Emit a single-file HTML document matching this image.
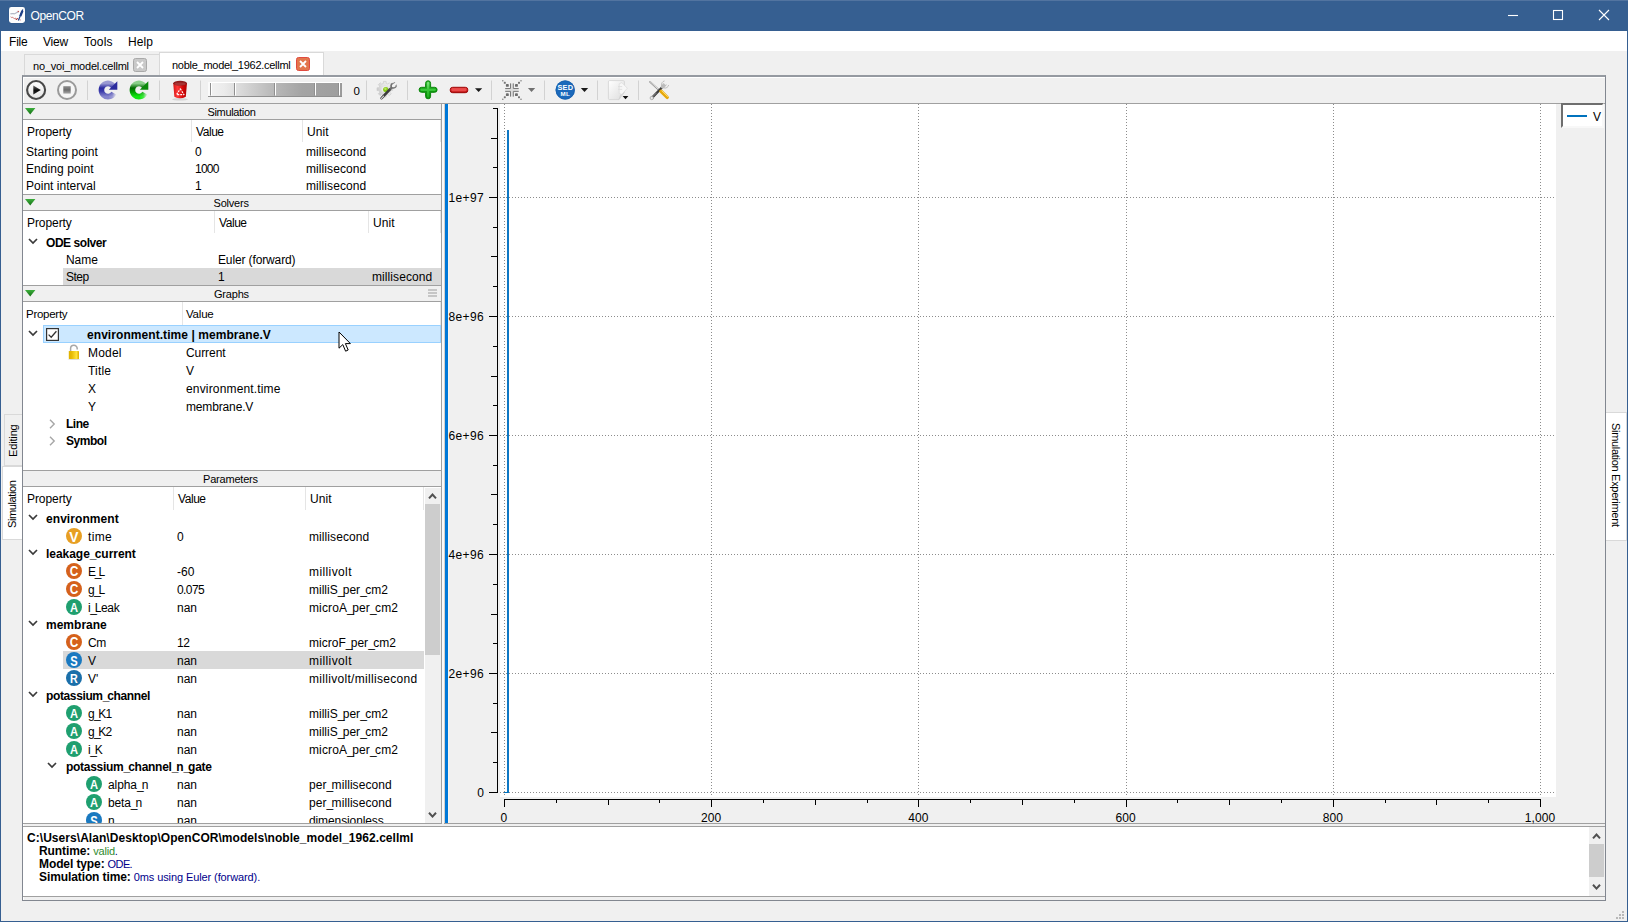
<!DOCTYPE html><html><head><meta charset="utf-8"><title>OpenCOR</title><style>*{box-sizing:border-box;margin:0;padding:0}
html,body{width:1628px;height:922px;overflow:hidden;background:#f0f0f0}
body{font-family:"Liberation Sans",sans-serif;font-size:12px;color:#000;letter-spacing:.1px}
#win{position:absolute;left:0;top:0;width:1628px;height:922px;background:#f0f0f0;overflow:hidden}
.a{position:absolute}
.t{position:absolute;white-space:pre;line-height:16px;height:16px}
.b{font-weight:bold}
.th{font-size:11px;letter-spacing:-.2px}
#title{left:0;top:0;width:1628px;height:31px;background:#365f91}
#menu{left:1px;top:31px;width:1626px;height:20px;background:#fff}
.edgeL{left:0;top:31px;width:1px;height:891px;background:#365f91}
.edgeR{left:1627px;top:31px;width:1px;height:891px;background:#365f91}
.edgeB{left:0;top:921px;width:1628px;height:1px;background:#365f91}
</style></head><body>
<div id="win">
<div class="a" id="title"></div>
<div class="a" style="left:0;top:0;width:1628px;height:1px;background:#5274a0"></div>
<svg class="a" style="left:8px;top:6px" width="18" height="18" viewBox="-1 -1 18 18"><rect x="-.6" y="-.6" width="17.2" height="17.2" rx="3" fill="#2e5687" opacity=".7"/><rect x="0" y="0" width="16" height="16" rx="2.4" fill="#fdfdfd"/><path d="M1.4 6.9 q1.6 -.6 3 -.2 t2.8 -.8 t2.2 -.4" stroke="#b4b8c6" stroke-width="1.2" fill="none"/><path d="M8.6 4.3 l1.4 .3" stroke="#c65a5a" stroke-width="1.1"/><path d="M1.6 9.8 l1.2 .8 l1 -.4 l1.4 1.6 l1.2 -.8 l1.2 1.4 l1.3 -1.4" stroke="#c87070" stroke-width=".9" fill="none"/><path d="M6.6 12.2 l1.4 .2 l.6 -1" stroke="#a83030" stroke-width="1" fill="none"/><path d="M9.4 13.4 L13.8 2.6" stroke="#1d3f86" stroke-width="1.2" fill="none"/><path d="M11.3 9.2 L13.4 3.8" stroke="#1d3f86" stroke-width="2.3" fill="none"/><path d="M10.6 12.8 l1.2 .2" stroke="#b05a6a" stroke-width=".8"/></svg>
<div class="t" style="left:30.5px;top:8px;color:#fff;font-size:12px;letter-spacing:-.4px">OpenCOR</div>
<svg class="a" style="left:1500px;top:0" width="128" height="31" viewBox="0 0 128 31" fill="none" stroke="#fff" stroke-width="1.1"><path d="M8 15.5h10"/><rect x="53.5" y="10.5" width="9" height="9"/><path d="M99 10l10 10M109 10l-10 10"/></svg>
<div class="a" id="menu"></div>
<div class="t" style="left:9px;top:34px;letter-spacing:-.2px">File</div>
<div class="t" style="left:43px;top:34px;letter-spacing:-.25px">View</div>
<div class="t" style="left:84px;top:34px">Tools</div>
<div class="t" style="left:128px;top:34px">Help</div>
<div class="a edgeL"></div><div class="a edgeR"></div><div class="a edgeB"></div>
<!-- tabs -->
<div class="a" style="left:24px;top:54px;width:136px;height:22px;border:1px solid #d9d9d9;border-bottom:none;background:#f0f0f0"></div>
<div class="t th" style="left:33px;top:58px">no_voi_model.cellml</div>
<svg class="a" style="left:133px;top:58px" width="14" height="14" viewBox="0 0 14 14"><rect x=".5" y=".5" width="13" height="13" rx="2" fill="#c9c9c9" stroke="#a9a9a9"/><path d="M4 4l6 6M10 4l-6 6" stroke="#fff" stroke-width="1.8"/></svg>
<!-- outer frame -->
<div class="a" style="left:22px;top:75px;width:1584px;height:826px;border:1px solid #828790;border-top:2px solid #959aa1"></div>
<div class="a" style="left:23px;top:77px;width:1582px;height:1px;background:#fff"></div>
<div class="a" style="left:23px;top:77px;width:1px;height:823px;background:#fff"></div>
<div class="a" style="left:159px;top:52px;width:165px;height:23px;border:1px solid #d9d9d9;border-bottom:none;background:#fff"></div>
<div class="t th" style="left:172px;top:57px;letter-spacing:-.27px">noble_model_1962.cellml</div>
<svg class="a" style="left:296px;top:57px" width="14" height="14" viewBox="0 0 14 14"><rect x=".5" y=".5" width="13" height="13" rx="2" fill="#e2764d" stroke="#e04a3f"/><path d="M4 4l6 6M10 4l-6 6" stroke="#fff" stroke-width="1.8"/></svg>
<!-- left vertical tabs -->
<div class="a" style="left:4px;top:414px;width:18px;height:52px;border:1px solid #d9d9d9;border-right:none;background:#f0f0f0"></div>

<div class="t" style="left:5px;top:456.5px;transform:rotate(-90deg);transform-origin:0 0;letter-spacing:-.15px;font-size:11px">Editing</div>
<div class="a" style="left:2px;top:466px;width:20px;height:74px;border:1px solid #d9d9d9;border-right:none;background:#fff"></div>
<div class="t" style="left:4px;top:528px;transform:rotate(-90deg);transform-origin:0 0;letter-spacing:-.4px;font-size:11px">Simulation</div>
<!-- right vertical tab -->
<div class="a" style="left:1606px;top:412px;width:21px;height:129px;border:1px solid #d9d9d9;border-left:none;background:#fff"></div>
<div class="t th" style="left:1624px;top:423px;transform:rotate(90deg);transform-origin:0 0;letter-spacing:-.3px">Simulation Experiment</div>
<!-- size grip -->
<svg class="a" style="left:1613px;top:910px" width="12" height="12" viewBox="0 0 12 12" fill="#b8b8b8"><rect x="9" y="1" width="2" height="2"/><rect x="6" y="4" width="2" height="2"/><rect x="9" y="4" width="2" height="2"/><rect x="3" y="7" width="2" height="2"/><rect x="6" y="7" width="2" height="2"/><rect x="9" y="7" width="2" height="2"/></svg>

<!-- toolbar -->
<div class="a" style="left:24px;top:103px;width:1581px;height:1px;background:#a0a0a0"></div>
<svg class="a" style="left:24px;top:78px" width="680" height="25" viewBox="24 78 680 25">
<defs>
<linearGradient id="gPlay" x1="0" y1="0" x2="0" y2="1"><stop offset="0" stop-color="#ffffff"/><stop offset="1" stop-color="#e4e4e4"/></linearGradient>
<linearGradient id="gTri" x1="0" y1="0" x2="0" y2="1"><stop offset="0" stop-color="#6a6a6a"/><stop offset=".55" stop-color="#0a0a0a"/><stop offset="1" stop-color="#2a2a2a"/></linearGradient><linearGradient id="gStop" x1="0" y1="0" x2="0" y2="1"><stop offset="0" stop-color="#8c8c8c"/><stop offset=".5" stop-color="#6c6c6c"/><stop offset="1" stop-color="#a8a8a8"/></linearGradient>
<linearGradient id="gBlue" x1="0" y1="0" x2="0" y2="1"><stop offset="0" stop-color="#9a9ad2"/><stop offset=".35" stop-color="#2a2aa0"/><stop offset=".6" stop-color="#3c3cac"/><stop offset="1" stop-color="#8484cc"/></linearGradient>
<linearGradient id="gGreen" x1="0" y1="0" x2="0" y2="1"><stop offset="0" stop-color="#8ccf8c"/><stop offset=".35" stop-color="#006a00"/><stop offset=".65" stop-color="#00a000"/><stop offset="1" stop-color="#10e810"/></linearGradient>
<linearGradient id="gFade" x1="0" y1="0" x2="1" y2="0"><stop offset="0" stop-color="#fff"/><stop offset=".62" stop-color="#fff"/><stop offset=".95" stop-color="#000"/></linearGradient>
<mask id="mTailB" maskUnits="userSpaceOnUse" x="90" y="76" width="40" height="30"><rect x="96" y="78" width="24" height="25" fill="#fff"/><path d="M108 90 L122 90 L122 104 L110 104 Z" fill="url(#gFadeT)"/></mask>
<linearGradient id="gFadeT" x1="0" y1="0" x2="1" y2="0"><stop offset="0" stop-color="#fff"/><stop offset=".3" stop-color="#ccc"/><stop offset=".62" stop-color="#000"/></linearGradient>
<linearGradient id="gBin" x1="0" y1="0" x2="1" y2="0"><stop offset="0" stop-color="#d41414"/><stop offset=".3" stop-color="#ff3a3a"/><stop offset=".7" stop-color="#d40808"/><stop offset="1" stop-color="#b00000"/></linearGradient>
<linearGradient id="gWheel" x1="0" y1="0" x2="1" y2="0"><stop offset="0" stop-color="#f2f2f2"/><stop offset=".12" stop-color="#ebebeb"/><stop offset=".45" stop-color="#bdbdbd"/><stop offset=".7" stop-color="#a4a4a4"/><stop offset="1" stop-color="#9e9e9e"/></linearGradient>
<linearGradient id="gPlus" x1="0" y1="0" x2="0" y2="1"><stop offset="0" stop-color="#3cc03c"/><stop offset=".5" stop-color="#12a012"/><stop offset="1" stop-color="#0a8a0a"/></linearGradient>
<linearGradient id="gPlusH" gradientUnits="userSpaceOnUse" x1="0" y1="81" x2="0" y2="99"><stop offset="0" stop-color="#8cec8c"/><stop offset=".45" stop-color="#3cc83c"/><stop offset="1" stop-color="#18a818"/></linearGradient><linearGradient id="gMinus" x1="0" y1="0" x2="0" y2="1"><stop offset="0" stop-color="#f05050"/><stop offset=".5" stop-color="#dc3030"/><stop offset="1" stop-color="#b40c0c"/></linearGradient>
<linearGradient id="gGear" x1="0" y1=".6" x2="1" y2=".3"><stop offset="0" stop-color="#c8c8c8"/><stop offset=".45" stop-color="#e6e6e6"/><stop offset="1" stop-color="#eeeeee"/></linearGradient><linearGradient id="gDoc" x1="0" y1="0" x2="1" y2="1"><stop offset="0" stop-color="#ffffff"/><stop offset="1" stop-color="#dcdcdc"/></linearGradient>
</defs>
<!-- play -->
<circle cx="36.1" cy="90" r="9" fill="url(#gPlay)" stroke="#484848" stroke-width="2.1"/>
<path d="M33.3 85.4 L40.8 90 L33.3 94.6 Z" fill="url(#gTri)"/>
<!-- stop -->
<circle cx="67" cy="90" r="9" fill="#f6f6f6" stroke="#9a9a9a" stroke-width="2"/>
<rect x="63.3" y="86.2" width="7.4" height="7.4" fill="url(#gStop)"/>
<!-- separators -->
<g fill="#d2d2d2"><rect x="87" y="80.5" width="1" height="19.5"/><rect x="159" y="80.5" width="1" height="19.5"/><rect x="200" y="80.5" width="1" height="19.5"/><rect x="366" y="80.5" width="1" height="19.5"/><rect x="407" y="80.5" width="1" height="19.5"/><rect x="491" y="80.5" width="1" height="19.5"/><rect x="544" y="80.5" width="1" height="19.5"/><rect x="597" y="80.5" width="1" height="19.5"/><rect x="638" y="80.5" width="1" height="19.5"/></g>
<!-- blue redo -->
<g id="redoB" mask="url(#mTailB)">
<path d="M114.28 87.96 A6.6 6.6 0 1 0 113.83 93.10" fill="none" stroke="url(#gBlue)" stroke-width="5.6"/>
<path d="M117.3 81.3 L117.3 89.8 L108.8 89.8 Z" fill="#2c2c9e"/>
</g>
<g transform="translate(31 0)">
<mask id="mTailG" maskUnits="userSpaceOnUse" x="90" y="76" width="40" height="30"><rect x="96" y="78" width="24" height="25" fill="#fff"/><path d="M108 90 L122 90 L122 104 L110 104 Z" fill="url(#gFadeT)"/></mask>
<g mask="url(#mTailG)">
<path d="M114.28 87.96 A6.6 6.6 0 1 0 113.83 93.10" fill="none" stroke="url(#gGreen)" stroke-width="5.6"/>
<path d="M117.3 81.3 L117.3 89.8 L108.8 89.8 Z" fill="#0a8a0a"/>
</g></g>
<!-- bin -->
<ellipse cx="180" cy="99.3" rx="8" ry="1.2" fill="#c8c8c8" opacity=".7"/>
<path d="M173.2 83 L174.4 96.8 Q180 99.8 185.8 96.8 L187 83 Z" fill="url(#gBin)"/>
<ellipse cx="180.1" cy="83.2" rx="6.8" ry="2.4" fill="#8e1c1c"/>
<ellipse cx="180.1" cy="84" rx="5.6" ry="1.4" fill="#b04040" opacity=".7"/>
<path d="M180.3 88.8 L184 94.6 L176.6 94.6 Z" fill="none" stroke="#fff" stroke-width="1.1" stroke-dasharray="1.9 1" stroke-linejoin="round"/>
<!-- wheel -->
<rect x="208" y="82" width="134" height="15" fill="url(#gWheel)"/>
<rect x="208" y="82" width="134" height="1" fill="#fff"/><rect x="208" y="82" width="2" height="14" fill="#fafafa"/>
<rect x="208" y="96" width="134" height="1" fill="#8f8f8f"/>
<g fill="#8f8f8f"><rect x="210" y="83" width="1" height="12.5"/><rect x="234" y="83" width="1" height="12.5"/><rect x="274" y="83" width="1" height="12.5"/><rect x="314" y="83" width="1" height="12.5"/><rect x="338" y="83" width="1" height="12.5"/></g>
<g fill="#fff"><rect x="211" y="83" width="1" height="12.5"/><rect x="235" y="83" width="1" height="12.5"/><rect x="275" y="83" width="1" height="12.5"/><rect x="315" y="83" width="1" height="12.5"/><rect x="339" y="83" width="1" height="12.5"/></g>
<rect x="340.5" y="83" width="1.5" height="13" fill="#9a9a9a"/>
<!-- gear+wrench -->
<g>
<path d="M383.40 83.37 L383.44 81.42 L386.16 81.42 L386.20 83.37 L387.93 84.08 L389.34 82.74 L391.26 84.66 L389.92 86.07 L390.63 87.80 L392.58 87.84 L392.58 90.56 L390.63 90.60 L389.92 92.33 L391.26 93.74 L389.34 95.66 L387.93 94.32 L386.20 95.03 L386.16 96.98 L383.44 96.98 L383.40 95.03 L381.67 94.32 L380.26 95.66 L378.34 93.74 L379.68 92.33 L378.97 90.60 L377.02 90.56 L377.02 87.84 L378.97 87.80 L379.68 86.07 L378.34 84.66 L380.26 82.74 L381.67 84.08 Z" fill="url(#gGear)" stroke="#cdcdcd" stroke-width=".7" stroke-linejoin="round"/>
<circle cx="384.8" cy="89.2" r="3.6" fill="#ececec" stroke="#d6d6d6" stroke-width=".5"/>
<circle cx="385.8" cy="89.6" r="2.7" fill="#86c81a"/><circle cx="385.4" cy="88.8" r="1.2" fill="#b8e65a"/>
<path d="M381.6 98.2 L390.4 88.8" stroke="#3c3c3c" stroke-width="2.6" stroke-linecap="round"/>
<path d="M381.5 98.3 L383.6 96.1" stroke="#d8d8d8" stroke-width="1.1" stroke-linecap="round"/>
<path d="M390.2 89 L391.6 87.4 M391.4 87.8 Q390.4 85 392.2 83.6 M391.4 87.8 Q394.4 88.8 396 86.6" fill="none" stroke="#6e6e6e" stroke-width="1.5" stroke-linecap="round"/><path d="M393.4 83.4 l1.2 -.8 M395.6 86.4 l.9 -1.2" stroke="#9a9a9a" stroke-width="1.2" stroke-linecap="round"/>
<path d="M393 86.2 L395.2 84" stroke="#f4f4f4" stroke-width="1.6" stroke-linecap="round"/>
</g>
<!-- plus -->
<path d="M425.6 83.3 a2.5 2.5 0 0 1 5 0 v4 h4 a2.5 2.5 0 0 1 0 5 h-4 v4 a2.5 2.5 0 0 1 -5 0 v-4 h-4 a2.5 2.5 0 0 1 0-5 h4 Z" fill="url(#gPlus)" stroke="#0a860a" stroke-width="1"/><path d="M428.1 83 V96.6 M421.4 89.8 H434.8" stroke="url(#gPlusH)" stroke-width="2.2" stroke-linecap="round" fill="none"/>
<!-- minus -->
<rect x="450.2" y="87.3" width="17.6" height="5.4" rx="2.5" fill="url(#gMinus)" stroke="#9c0404" stroke-width="1"/><rect x="451.6" y="88.6" width="14.6" height="2.6" rx="1.3" fill="#ec5050" opacity=".85"/>
<path d="M475 88.2 h7.2 l-3.6 3.8 Z" fill="#1a1a1a"/>
<!-- zoom-fit -->
<g>
<rect x="510.5" y="83.5" width="2.8" height="13" fill="#dcdcdc"/><rect x="505.2" y="88.5" width="13.5" height="2.9" fill="#dcdcdc"/>
<path d="M510.5 83.4 V88.5 H505.2 M513.3 83.4 V88.5 H518.7 M510.5 96.6 V91.4 H505.2 M513.3 96.6 V91.4 H518.7" fill="none" stroke="#7a7a7a" stroke-width="1"/>
<rect x="505.90" y="83.90" width="2.9" height="2.9" rx="0.87" fill="#6c6c6c"/><rect x="503.80" y="81.80" width="2.0" height="2.0" rx="0.60" fill="#747474"/><rect x="502.10" y="80.10" width="1.4" height="1.4" rx="0.42" fill="#828282"/><rect x="505.90" y="93.20" width="2.9" height="2.9" rx="0.87" fill="#6c6c6c"/><rect x="503.80" y="96.20" width="2.0" height="2.0" rx="0.60" fill="#747474"/><rect x="502.10" y="98.50" width="1.4" height="1.4" rx="0.42" fill="#828282"/><rect x="515.00" y="83.90" width="2.9" height="2.9" rx="0.87" fill="#6c6c6c"/><rect x="518.00" y="81.80" width="2.0" height="2.0" rx="0.60" fill="#747474"/><rect x="520.30" y="80.10" width="1.4" height="1.4" rx="0.42" fill="#828282"/><rect x="515.00" y="93.20" width="2.9" height="2.9" rx="0.87" fill="#6c6c6c"/><rect x="518.00" y="96.20" width="2.0" height="2.0" rx="0.60" fill="#747474"/><rect x="520.30" y="98.50" width="1.4" height="1.4" rx="0.42" fill="#828282"/>
</g>
<path d="M527.9 88 h7.3 l-3.65 4 Z" fill="#707070"/>
<!-- sedml -->
<circle cx="565.2" cy="90" r="9.6" fill="#1b69bb"/>
<circle cx="565.2" cy="90" r="9.2" fill="none" stroke="#175ea9" stroke-width=".8"/>
<text x="565.3" y="90.2" text-anchor="middle" font-family="Liberation Sans,sans-serif" font-weight="bold" font-size="7.4" fill="#fff" letter-spacing=".2">SED</text>
<text x="565.3" y="95.7" text-anchor="middle" font-family="Liberation Sans,sans-serif" font-weight="bold" font-size="6.2" fill="#fff" letter-spacing=".3">ML</text>
<path d="M580.8 88 h7.4 l-3.7 4 Z" fill="#1a1a1a"/>
<!-- doc -->
<path d="M609.6 80.6 h13.6 q1.2 0 1.2 1.2 v10.4 l-5.4 7.4 h-9.4 q-1.2 0 -1.2 -1.2 v-16.6 q0 -1.2 1.2 -1.2 Z" fill="url(#gDoc)" stroke="#d2d2d2" stroke-width=".8"/>
<path d="M619 99.4 q.2-4.4 5.2-7" fill="none" stroke="#cfcfcf" stroke-width=".8"/>
<path d="M621.8 82.6 l5.6 5.6 l-5.6 6.2 l-2.6 -1 l0 -9.6 Z" fill="#f7f7f7" stroke="#dadada" stroke-width=".7"/>
<path d="M618 86.6 h4.2 M618 89.4 h4.2" stroke="#dcdcdc" stroke-width=".9"/>
<path d="M622.6 96 h5.8 l-2.9 3.2 Z" fill="#111"/>
<!-- tools -->
<g stroke-linecap="round">
<path d="M650 81.8 L659.6 90.6" stroke="#8e8e8e" stroke-width="1.7"/>
<path d="M650 81.6 L659.4 90.2" stroke="#f4f4f4" stroke-width=".8"/>
<path d="M652.4 97.4 L663.4 86" stroke="#3a3a3a" stroke-width="2.4"/>
<circle cx="651.8" cy="98" r="1.7" fill="#e8e8e8" stroke="#9a9a9a" stroke-width=".7"/>
<path d="M652.8 96.6 L656.4 93" stroke="#9c9c9c" stroke-width=".9"/>
<path d="M662.6 86.8 L665 84.2" stroke="#bdbdbd" stroke-width="3.6"/>
<path d="M663.6 81.6 l2.1 2.1 l2.3-1.3" fill="none" stroke="#f0f0f0" stroke-width="2"/>
<path d="M664.2 81 a3.4 3.4 0 0 0 -2.6 4.4 M668.6 85.4 a3.4 3.4 0 0 1 -4.4 2.6" fill="none" stroke="#a8a8a8" stroke-width=".7"/>
<path d="M661 91.2 L667.2 97.4" stroke="#e6a80c" stroke-width="3.4"/>
<path d="M661.8 90.8 L667.6 96.6" stroke="#ffdc64" stroke-width="1"/>
</g>
</svg>
<div class="t" style="left:353.5px;top:83px;letter-spacing:0;font-size:11.5px">0</div>

<div class="a" style="left:23px;top:104px;width:418px;height:720px;background:#fff;"></div>
<div class="a" style="left:441px;top:104px;width:1px;height:720px;background:#a0a0a0;"></div>
<div class="a" style="left:23px;top:823px;width:419px;height:1px;background:#a0a0a0;"></div>
<div class="a" style="left:444px;top:823px;width:1161px;height:1px;background:#a0a0a0;"></div>
<div class="a" style="left:23px;top:103px;width:418px;height:1px;background:#a0a0a0;"></div>
<div class="a" style="left:23px;top:104px;width:418px;height:15px;background:#f0f0f0;"></div>
<div class="a" style="left:23px;top:119px;width:418px;height:1px;background:#a0a0a0;"></div>
<div class="t th" style="left:207.5px;top:103.5px;letter-spacing:-0.34px;">Simulation</div>
<svg class="a" style="left:25px;top:108px" width="11" height="7" viewBox="0 0 11 7"><defs><linearGradient id="tg103" x1="0" y1="0" x2="0" y2="1"><stop offset="0" stop-color="#3cae3c"/><stop offset="1" stop-color="#157015"/></linearGradient></defs><path d="M0 0 H10.4 L5.2 6.6 Z" fill="url(#tg103)"/></svg>
<div class="t" style="left:27px;top:124px;letter-spacing:-0.069px;">Property</div>
<div class="t" style="left:196px;top:124px;letter-spacing:-0.44px;">Value</div>
<div class="t" style="left:307px;top:124px;letter-spacing:0.065px;">Unit</div>
<div class="a" style="left:191px;top:120px;width:1px;height:22px;background:#e5e5e5;"></div>
<div class="a" style="left:302px;top:120px;width:1px;height:22px;background:#e5e5e5;"></div>
<div class="a" style="left:440px;top:120px;width:1px;height:22px;background:#e5e5e5;"></div>
<div class="t" style="left:26px;top:144px;letter-spacing:0.085px;">Starting point</div>
<div class="t" style="left:195px;top:144px;letter-spacing:0.1px;">0</div>
<div class="t" style="left:306px;top:144px;letter-spacing:0.086px;">millisecond</div>
<div class="t" style="left:26px;top:161px;letter-spacing:0.082px;">Ending point</div>
<div class="t" style="left:195px;top:161px;letter-spacing:-0.798px;">1000</div>
<div class="t" style="left:306px;top:161px;letter-spacing:0.086px;">millisecond</div>
<div class="t" style="left:26px;top:178px;letter-spacing:0.024px;">Point interval</div>
<div class="t" style="left:195px;top:178px;letter-spacing:0.1px;">1</div>
<div class="t" style="left:306px;top:178px;letter-spacing:0.086px;">millisecond</div>
<div class="a" style="left:23px;top:194px;width:418px;height:1px;background:#a0a0a0;"></div>
<div class="a" style="left:23px;top:195px;width:418px;height:15px;background:#f0f0f0;"></div>
<div class="a" style="left:23px;top:210px;width:418px;height:1px;background:#a0a0a0;"></div>
<div class="t th" style="left:213.5px;top:194.5px;letter-spacing:-0.2px;">Solvers</div>
<svg class="a" style="left:25px;top:199px" width="11" height="7" viewBox="0 0 11 7"><defs><linearGradient id="tg194" x1="0" y1="0" x2="0" y2="1"><stop offset="0" stop-color="#3cae3c"/><stop offset="1" stop-color="#157015"/></linearGradient></defs><path d="M0 0 H10.4 L5.2 6.6 Z" fill="url(#tg194)"/></svg>
<div class="t" style="left:27px;top:215px;letter-spacing:-0.069px;">Property</div>
<div class="t" style="left:219px;top:215px;letter-spacing:-0.44px;">Value</div>
<div class="t" style="left:373px;top:215px;letter-spacing:0.065px;">Unit</div>
<div class="a" style="left:214px;top:211px;width:1px;height:22px;background:#e5e5e5;"></div>
<div class="a" style="left:368px;top:211px;width:1px;height:22px;background:#e5e5e5;"></div>
<div class="a" style="left:440px;top:211px;width:1px;height:22px;background:#e5e5e5;"></div>
<svg class="a" style="left:27.7px;top:238px" width="10" height="7" viewBox="0 0 10 7"><path d="M1 1 L5 5 L9 1" fill="none" stroke="#3a3a3a" stroke-width="1.7"/></svg>
<div class="t b" style="left:46px;top:235px;letter-spacing:-0.439px;">ODE solver</div>
<div class="t" style="left:66px;top:252px;letter-spacing:-0.052px;">Name</div>
<div class="t" style="left:218px;top:252px;letter-spacing:-0.13px;">Euler (forward)</div>
<div class="a" style="left:63px;top:268px;width:378px;height:17px;background:#d9d9d9;"></div>
<div class="t" style="left:66px;top:269px;letter-spacing:-0.496px;">Step</div>
<div class="t" style="left:218px;top:269px;letter-spacing:0.1px;">1</div>
<div class="t" style="left:372px;top:269px;letter-spacing:0.086px;">millisecond</div>
<div class="a" style="left:23px;top:285px;width:418px;height:1px;background:#a0a0a0;"></div>
<div class="a" style="left:23px;top:286px;width:418px;height:15px;background:#f0f0f0;"></div>
<div class="a" style="left:23px;top:301px;width:418px;height:1px;background:#a0a0a0;"></div>
<div class="t th" style="left:214px;top:285.5px;letter-spacing:-0.2px;">Graphs</div>
<svg class="a" style="left:25px;top:290px" width="11" height="7" viewBox="0 0 11 7"><defs><linearGradient id="tg285" x1="0" y1="0" x2="0" y2="1"><stop offset="0" stop-color="#3cae3c"/><stop offset="1" stop-color="#157015"/></linearGradient></defs><path d="M0 0 H10.4 L5.2 6.6 Z" fill="url(#tg285)"/></svg>
<svg class="a" style="left:428.4px;top:289px" width="10" height="9" viewBox="0 0 10 9"><path d="M0 1h9M0 4h9M0 7h9" stroke="#b8b8b8" stroke-width="1.7"/></svg>
<div class="a" style="left:182px;top:302px;width:1px;height:23px;background:#e5e5e5;"></div>
<div class="a" style="left:440px;top:302px;width:1px;height:23px;background:#e5e5e5;"></div>
<div class="t" style="left:26px;top:306px;font-size:11.5px;letter-spacing:-.27px;">Property</div>
<div class="t" style="left:186px;top:306px;font-size:11.5px;letter-spacing:-.2px;">Value</div>
<svg class="a" style="left:27.7px;top:330px" width="10" height="7" viewBox="0 0 10 7"><path d="M1 1 L5 5 L9 1" fill="none" stroke="#3a3a3a" stroke-width="1.7"/></svg>
<div class="a" style="left:43px;top:325px;width:398px;height:18px;background:#cce8ff;border:1px solid #99d1ff"></div>
<svg class="a" style="left:46px;top:328px" width="13" height="13" viewBox="0 0 13 13"><rect x=".6" y=".6" width="11.8" height="11.8" fill="#fff" stroke="#333" stroke-width="1.2"/><path d="M2.6 6.6 L5.2 9.2 L10.4 3.2" fill="none" stroke="#333" stroke-width="1.3"/></svg>
<div class="t b" style="left:87px;top:326.5px;letter-spacing:0.063px;">environment.time | membrane.V</div>
<svg class="a" style="left:67px;top:344px" width="14" height="16" viewBox="0 0 14 16"><defs><linearGradient id="lk" x1="0" y1="0" x2="1" y2="0"><stop offset="0" stop-color="#deb000"/><stop offset=".3" stop-color="#e8bc08"/><stop offset=".75" stop-color="#ffe23c"/><stop offset="1" stop-color="#dcac00"/></linearGradient></defs><ellipse cx="7" cy="15.3" rx="6.5" ry=".6" fill="#ddd"/><path d="M3.6 7.2 V4.6 A3.3 3.3 0 0 1 10.2 4.6 V5.4" fill="none" stroke="#a8a8a8" stroke-width="1.5"/><rect x="1.8" y="7" width="10.2" height="8" rx=".6" fill="url(#lk)"/></svg>
<div class="t" style="left:88px;top:345px;letter-spacing:0.203px;">Model</div>
<div class="t" style="left:186px;top:345px;letter-spacing:-0.073px;">Current</div>
<div class="t" style="left:88px;top:363px;letter-spacing:0.195px;">Title</div>
<div class="t" style="left:186px;top:363px;letter-spacing:0.1px;">V</div>
<div class="t" style="left:88px;top:381px;letter-spacing:0.1px;">X</div>
<div class="t" style="left:186px;top:381px;letter-spacing:0.16px;">environment.time</div>
<div class="t" style="left:88px;top:399px;letter-spacing:0.1px;">Y</div>
<div class="t" style="left:186px;top:399px;letter-spacing:-0.15px;">membrane.V</div>
<svg class="a" style="left:48.5px;top:419px" width="7" height="10" viewBox="0 0 7 10"><path d="M1 .8 L5.2 5 L1 9.2" fill="none" stroke="#a6a6a6" stroke-width="1.4"/></svg>
<div class="t b" style="left:66px;top:416px;letter-spacing:-0.492px;">Line</div>
<svg class="a" style="left:48.5px;top:436px" width="7" height="10" viewBox="0 0 7 10"><path d="M1 .8 L5.2 5 L1 9.2" fill="none" stroke="#a6a6a6" stroke-width="1.4"/></svg>
<div class="t b" style="left:66px;top:433px;letter-spacing:-0.457px;">Symbol</div>
<div class="a" style="left:23px;top:470px;width:418px;height:1px;background:#a0a0a0;"></div>
<div class="a" style="left:23px;top:471px;width:418px;height:15px;background:#f0f0f0;"></div>
<div class="a" style="left:23px;top:486px;width:418px;height:1px;background:#a0a0a0;"></div>
<div class="t th" style="left:203px;top:470.5px;letter-spacing:-0.2px;">Parameters</div>
<div class="t" style="left:27px;top:491px;letter-spacing:-0.069px;">Property</div>
<div class="t" style="left:178px;top:491px;letter-spacing:-0.44px;">Value</div>
<div class="t" style="left:310px;top:491px;letter-spacing:0.065px;">Unit</div>
<div class="a" style="left:173px;top:487px;width:1px;height:23px;background:#e5e5e5;"></div>
<div class="a" style="left:305px;top:487px;width:1px;height:23px;background:#e5e5e5;"></div>
<div class="a" style="left:423px;top:487px;width:1px;height:23px;background:#e5e5e5;"></div>
<div class="a" style="left:23px;top:509px;width:401px;height:314px;overflow:hidden">
<svg class="a" style="left:4.7px;top:4.5px" width="10" height="7" viewBox="0 0 10 7"><path d="M1 1 L5 5 L9 1" fill="none" stroke="#3a3a3a" stroke-width="1.7"/></svg>
<div class="t b" style="left:23px;top:2px;letter-spacing:0.063px">environment</div>
<svg class="a" style="left:43px;top:19.0px" width="16" height="16" viewBox="0 0 16 16"><circle cx="8" cy="8" r="8" fill="#e79f23"/><text transform="translate(8 13.6) scale(0.92 1)" text-anchor="middle" font-family="Liberation Sans,sans-serif" font-weight="bold" font-size="15" fill="#fff">V</text></svg>
<div class="t" style="left:65px;top:20px;letter-spacing:0.332px">time</div>
<div class="t" style="left:154px;top:20px;letter-spacing:0.1px">0</div>
<div class="t" style="left:286px;top:20px;letter-spacing:0.086px">millisecond</div>
<svg class="a" style="left:4.7px;top:39.5px" width="10" height="7" viewBox="0 0 10 7"><path d="M1 1 L5 5 L9 1" fill="none" stroke="#3a3a3a" stroke-width="1.7"/></svg>
<div class="t b" style="left:23px;top:37px;letter-spacing:-0.037px">leakage<span style="letter-spacing:-1.737px">_</span>current</div>
<svg class="a" style="left:43px;top:54.0px" width="16" height="16" viewBox="0 0 16 16"><circle cx="8" cy="8" r="8" fill="#d5611b"/><text transform="translate(8 13.3) scale(0.79 1)" text-anchor="middle" font-family="Liberation Sans,sans-serif" font-weight="bold" font-size="15" fill="#fff">C</text></svg>
<div class="t" style="left:65px;top:55px;letter-spacing:-1.217px">E<span style="letter-spacing:-2.917px">_</span>L</div>
<div class="t" style="left:154px;top:55px;letter-spacing:0.019px">-60</div>
<div class="t" style="left:286px;top:55px;letter-spacing:0.396px">millivolt</div>
<svg class="a" style="left:43px;top:72.0px" width="16" height="16" viewBox="0 0 16 16"><circle cx="8" cy="8" r="8" fill="#d5611b"/><text transform="translate(8 13.3) scale(0.79 1)" text-anchor="middle" font-family="Liberation Sans,sans-serif" font-weight="bold" font-size="15" fill="#fff">C</text></svg>
<div class="t" style="left:65px;top:73px;letter-spacing:-0.573px">g<span style="letter-spacing:-2.273px">_</span>L</div>
<div class="t" style="left:154px;top:73px;letter-spacing:-0.586px">0.075</div>
<div class="t" style="left:286px;top:73px;letter-spacing:0.013px">milliS<span style="letter-spacing:-1.687px">_</span>per<span style="letter-spacing:-1.687px">_</span>cm2</div>
<svg class="a" style="left:43px;top:90.0px" width="16" height="16" viewBox="0 0 16 16"><circle cx="8" cy="8" r="8" fill="#1f9f6f"/><text transform="translate(8 13) scale(0.93 1)" text-anchor="middle" font-family="Liberation Sans,sans-serif" font-weight="bold" font-size="12" fill="#fff">A</text></svg>
<div class="t" style="left:65px;top:91px;letter-spacing:-0.41px">i<span style="letter-spacing:-2.11px">_</span>Leak</div>
<div class="t" style="left:154px;top:91px;letter-spacing:-0.04px">nan</div>
<div class="t" style="left:286px;top:91px;letter-spacing:0.122px">microA<span style="letter-spacing:-1.578px">_</span>per<span style="letter-spacing:-1.578px">_</span>cm2</div>
<svg class="a" style="left:4.7px;top:110.5px" width="10" height="7" viewBox="0 0 10 7"><path d="M1 1 L5 5 L9 1" fill="none" stroke="#3a3a3a" stroke-width="1.7"/></svg>
<div class="t b" style="left:23px;top:108px;letter-spacing:0.014px">membrane</div>
<svg class="a" style="left:43px;top:125.0px" width="16" height="16" viewBox="0 0 16 16"><circle cx="8" cy="8" r="8" fill="#d5611b"/><text transform="translate(8 13.3) scale(0.79 1)" text-anchor="middle" font-family="Liberation Sans,sans-serif" font-weight="bold" font-size="15" fill="#fff">C</text></svg>
<div class="t" style="left:65px;top:126px;letter-spacing:-0.331px">Cm</div>
<div class="t" style="left:154px;top:126px;letter-spacing:-0.473px">12</div>
<div class="t" style="left:286px;top:126px;letter-spacing:0.013px">microF<span style="letter-spacing:-1.687px">_</span>per<span style="letter-spacing:-1.687px">_</span>cm2</div>
<div class="a" style="left:40px;top:142px;width:361px;height:18px;background:#d9d9d9"></div>
<svg class="a" style="left:43px;top:143.0px" width="16" height="16" viewBox="0 0 16 16"><circle cx="8" cy="8" r="8" fill="#1a79c0"/><text transform="translate(8 13.7) scale(0.72 1)" text-anchor="middle" font-family="Liberation Sans,sans-serif" font-weight="bold" font-size="15.5" fill="#fff">S</text></svg>
<div class="t" style="left:65px;top:144px;letter-spacing:0.1px">V</div>
<div class="t" style="left:154px;top:144px;letter-spacing:-0.04px">nan</div>
<div class="t" style="left:286px;top:144px;letter-spacing:0.396px">millivolt</div>
<svg class="a" style="left:43px;top:161.0px" width="16" height="16" viewBox="0 0 16 16"><circle cx="8" cy="8" r="8" fill="#1b6fa9"/><text transform="translate(8 13.3) scale(0.8 1)" text-anchor="middle" font-family="Liberation Sans,sans-serif" font-weight="bold" font-size="13.4" fill="#fff">R</text></svg>
<div class="t" style="left:65px;top:162px;letter-spacing:0.1px">V'</div>
<div class="t" style="left:154px;top:162px;letter-spacing:-0.04px">nan</div>
<div class="t" style="left:286px;top:162px;letter-spacing:0.304px">millivolt/millisecond</div>
<svg class="a" style="left:4.7px;top:181.5px" width="10" height="7" viewBox="0 0 10 7"><path d="M1 1 L5 5 L9 1" fill="none" stroke="#3a3a3a" stroke-width="1.7"/></svg>
<div class="t b" style="left:23px;top:179px;letter-spacing:-0.372px">potassium<span style="letter-spacing:-2.072px">_</span>channel</div>
<svg class="a" style="left:43px;top:196.0px" width="16" height="16" viewBox="0 0 16 16"><circle cx="8" cy="8" r="8" fill="#1f9f6f"/><text transform="translate(8 13) scale(0.93 1)" text-anchor="middle" font-family="Liberation Sans,sans-serif" font-weight="bold" font-size="12" fill="#fff">A</text></svg>
<div class="t" style="left:65px;top:197px;letter-spacing:-0.706px">g<span style="letter-spacing:-2.406px">_</span>K1</div>
<div class="t" style="left:154px;top:197px;letter-spacing:-0.04px">nan</div>
<div class="t" style="left:286px;top:197px;letter-spacing:0.013px">milliS<span style="letter-spacing:-1.687px">_</span>per<span style="letter-spacing:-1.687px">_</span>cm2</div>
<svg class="a" style="left:43px;top:214.0px" width="16" height="16" viewBox="0 0 16 16"><circle cx="8" cy="8" r="8" fill="#1f9f6f"/><text transform="translate(8 13) scale(0.93 1)" text-anchor="middle" font-family="Liberation Sans,sans-serif" font-weight="bold" font-size="12" fill="#fff">A</text></svg>
<div class="t" style="left:65px;top:215px;letter-spacing:-0.706px">g<span style="letter-spacing:-2.406px">_</span>K2</div>
<div class="t" style="left:154px;top:215px;letter-spacing:-0.04px">nan</div>
<div class="t" style="left:286px;top:215px;letter-spacing:0.013px">milliS<span style="letter-spacing:-1.687px">_</span>per<span style="letter-spacing:-1.687px">_</span>cm2</div>
<svg class="a" style="left:43px;top:232.0px" width="16" height="16" viewBox="0 0 16 16"><circle cx="8" cy="8" r="8" fill="#1f9f6f"/><text transform="translate(8 13) scale(0.93 1)" text-anchor="middle" font-family="Liberation Sans,sans-serif" font-weight="bold" font-size="12" fill="#fff">A</text></svg>
<div class="t" style="left:65px;top:233px;letter-spacing:-0.415px">i<span style="letter-spacing:-2.115px">_</span>K</div>
<div class="t" style="left:154px;top:233px;letter-spacing:-0.04px">nan</div>
<div class="t" style="left:286px;top:233px;letter-spacing:0.122px">microA<span style="letter-spacing:-1.578px">_</span>per<span style="letter-spacing:-1.578px">_</span>cm2</div>
<svg class="a" style="left:24.2px;top:252.5px" width="10" height="7" viewBox="0 0 10 7"><path d="M1 1 L5 5 L9 1" fill="none" stroke="#3a3a3a" stroke-width="1.7"/></svg>
<div class="t b" style="left:43.0px;top:250px;letter-spacing:-0.278px">potassium<span style="letter-spacing:-1.978px">_</span>channel<span style="letter-spacing:-1.978px">_</span>n<span style="letter-spacing:-1.978px">_</span>gate</div>
<svg class="a" style="left:62.5px;top:267.0px" width="16" height="16" viewBox="0 0 16 16"><circle cx="8" cy="8" r="8" fill="#1f9f6f"/><text transform="translate(8 13) scale(0.93 1)" text-anchor="middle" font-family="Liberation Sans,sans-serif" font-weight="bold" font-size="12" fill="#fff">A</text></svg>
<div class="t" style="left:85.0px;top:268px;letter-spacing:-0.087px">alpha<span style="letter-spacing:-1.787px">_</span>n</div>
<div class="t" style="left:154px;top:268px;letter-spacing:-0.04px">nan</div>
<div class="t" style="left:286px;top:268px;letter-spacing:0.069px">per<span style="letter-spacing:-1.631px">_</span>millisecond</div>
<svg class="a" style="left:62.5px;top:285.0px" width="16" height="16" viewBox="0 0 16 16"><circle cx="8" cy="8" r="8" fill="#1f9f6f"/><text transform="translate(8 13) scale(0.93 1)" text-anchor="middle" font-family="Liberation Sans,sans-serif" font-weight="bold" font-size="12" fill="#fff">A</text></svg>
<div class="t" style="left:85.0px;top:286px;letter-spacing:-0.167px">beta<span style="letter-spacing:-1.867px">_</span>n</div>
<div class="t" style="left:154px;top:286px;letter-spacing:-0.04px">nan</div>
<div class="t" style="left:286px;top:286px;letter-spacing:0.069px">per<span style="letter-spacing:-1.631px">_</span>millisecond</div>
<svg class="a" style="left:62.5px;top:303.0px" width="16" height="16" viewBox="0 0 16 16"><circle cx="8" cy="8" r="8" fill="#1a79c0"/><text transform="translate(8 13.7) scale(0.72 1)" text-anchor="middle" font-family="Liberation Sans,sans-serif" font-weight="bold" font-size="15.5" fill="#fff">S</text></svg>
<div class="t" style="left:85.0px;top:304px;letter-spacing:0.1px">n</div>
<div class="t" style="left:154px;top:304px;letter-spacing:-0.04px">nan</div>
<div class="t" style="left:286px;top:304px;letter-spacing:-0.11px">dimensionless</div>
</div>
<div class="a" style="left:425px;top:488px;width:16px;height:335px;background:#f0f0f0;"></div>
<div class="a" style="left:425px;top:504px;width:15px;height:151px;background:#cdcdcd;"></div>
<svg class="a" style="left:428px;top:492px" width="9" height="8" viewBox="0 0 9 8"><path d="M1 6.4 L4.5 2.6 L8 6.4" fill="none" stroke="#505050" stroke-width="2"/></svg>
<svg class="a" style="left:428px;top:811px" width="9" height="8" viewBox="0 0 9 8"><path d="M1 1.8 L4.5 5.6 L8 1.8" fill="none" stroke="#505050" stroke-width="2"/></svg>
<div class="a" style="left:442px;top:104px;width:2px;height:719px;background:#fafafa;"></div>
<div class="a" style="left:444px;top:104px;width:1px;height:719px;background:#d4d0cc;"></div>
<div class="a" style="left:445px;top:104px;width:3px;height:719px;background:#0078d7;"></div>
<div class="a" style="left:448px;top:104px;width:1px;height:719px;background:#f8f5f1;"></div>
<svg class="a" style="left:338px;top:331px" width="14" height="22" viewBox="0 0 14 22"><path d="M1 1 V17.2 L4.8 13.6 L7.6 20.2 L10.2 19 L7.4 12.6 L12.4 12.6 Z" fill="#fff" stroke="#000" stroke-width="1"/></svg>
<svg class="a" style="left:448px;top:104px" width="1157" height="719" viewBox="448 104 1157 719" shape-rendering="crispEdges" font-family="Liberation Sans,sans-serif" font-size="12">
<rect x="500" y="104" width="1056" height="693" fill="#fff"/>
<line x1="504.5" y1="104" x2="504.5" y2="797" stroke="#8c8c8c" stroke-width="1" stroke-dasharray="1 2"/>
<line x1="711.5" y1="104" x2="711.5" y2="797" stroke="#8c8c8c" stroke-width="1" stroke-dasharray="1 2"/>
<line x1="918.5" y1="104" x2="918.5" y2="797" stroke="#8c8c8c" stroke-width="1" stroke-dasharray="1 2"/>
<line x1="1126.5" y1="104" x2="1126.5" y2="797" stroke="#8c8c8c" stroke-width="1" stroke-dasharray="1 2"/>
<line x1="1333.5" y1="104" x2="1333.5" y2="797" stroke="#8c8c8c" stroke-width="1" stroke-dasharray="1 2"/>
<line x1="1540.5" y1="104" x2="1540.5" y2="797" stroke="#8c8c8c" stroke-width="1" stroke-dasharray="1 2"/>
<line x1="500" y1="792.5" x2="1556" y2="792.5" stroke="#8c8c8c" stroke-width="1" stroke-dasharray="1 2"/>
<line x1="500" y1="673.5" x2="1556" y2="673.5" stroke="#8c8c8c" stroke-width="1" stroke-dasharray="1 2"/>
<line x1="500" y1="554.5" x2="1556" y2="554.5" stroke="#8c8c8c" stroke-width="1" stroke-dasharray="1 2"/>
<line x1="500" y1="435.5" x2="1556" y2="435.5" stroke="#8c8c8c" stroke-width="1" stroke-dasharray="1 2"/>
<line x1="500" y1="316.5" x2="1556" y2="316.5" stroke="#8c8c8c" stroke-width="1" stroke-dasharray="1 2"/>
<line x1="500" y1="197.5" x2="1556" y2="197.5" stroke="#8c8c8c" stroke-width="1" stroke-dasharray="1 2"/>
<rect x="497" y="108" width="1" height="685" fill="#000"/>
<rect x="489" y="792" width="8" height="1" fill="#000"/>
<rect x="493" y="762" width="4" height="1" fill="#000"/>
<rect x="491" y="732" width="6" height="1" fill="#000"/>
<rect x="493" y="703" width="4" height="1" fill="#000"/>
<rect x="489" y="673" width="8" height="1" fill="#000"/>
<rect x="493" y="643" width="4" height="1" fill="#000"/>
<rect x="491" y="614" width="6" height="1" fill="#000"/>
<rect x="493" y="584" width="4" height="1" fill="#000"/>
<rect x="489" y="554" width="8" height="1" fill="#000"/>
<rect x="493" y="524" width="4" height="1" fill="#000"/>
<rect x="491" y="494" width="6" height="1" fill="#000"/>
<rect x="493" y="465" width="4" height="1" fill="#000"/>
<rect x="489" y="435" width="8" height="1" fill="#000"/>
<rect x="493" y="405" width="4" height="1" fill="#000"/>
<rect x="491" y="376" width="6" height="1" fill="#000"/>
<rect x="493" y="346" width="4" height="1" fill="#000"/>
<rect x="489" y="316" width="8" height="1" fill="#000"/>
<rect x="493" y="286" width="4" height="1" fill="#000"/>
<rect x="491" y="256" width="6" height="1" fill="#000"/>
<rect x="493" y="227" width="4" height="1" fill="#000"/>
<rect x="489" y="197" width="8" height="1" fill="#000"/>
<rect x="493" y="167" width="4" height="1" fill="#000"/>
<rect x="491" y="138" width="6" height="1" fill="#000"/>
<rect x="493" y="108" width="4" height="1" fill="#000"/>
<rect x="504" y="799" width="1037" height="1" fill="#000"/>
<rect x="504" y="799" width="1" height="8" fill="#000"/>
<rect x="556" y="799" width="1" height="4" fill="#000"/>
<rect x="608" y="799" width="1" height="6" fill="#000"/>
<rect x="659" y="799" width="1" height="4" fill="#000"/>
<rect x="711" y="799" width="1" height="8" fill="#000"/>
<rect x="763" y="799" width="1" height="4" fill="#000"/>
<rect x="815" y="799" width="1" height="6" fill="#000"/>
<rect x="867" y="799" width="1" height="4" fill="#000"/>
<rect x="918" y="799" width="1" height="8" fill="#000"/>
<rect x="970" y="799" width="1" height="4" fill="#000"/>
<rect x="1022" y="799" width="1" height="6" fill="#000"/>
<rect x="1074" y="799" width="1" height="4" fill="#000"/>
<rect x="1126" y="799" width="1" height="8" fill="#000"/>
<rect x="1177" y="799" width="1" height="4" fill="#000"/>
<rect x="1229" y="799" width="1" height="6" fill="#000"/>
<rect x="1281" y="799" width="1" height="4" fill="#000"/>
<rect x="1333" y="799" width="1" height="8" fill="#000"/>
<rect x="1385" y="799" width="1" height="4" fill="#000"/>
<rect x="1436" y="799" width="1" height="6" fill="#000"/>
<rect x="1488" y="799" width="1" height="4" fill="#000"/>
<rect x="1540" y="799" width="1" height="8" fill="#000"/>
<rect x="507" y="130" width="2" height="663" fill="#0f78c4"/>
<rect x="504" y="791.5" width="4" height="1.5" fill="#0072bd"/>
</svg>
<div class="t" style="left:433px;top:785px;width:51px;text-align:right;letter-spacing:0px">0</div>
<div class="t" style="left:433px;top:666px;width:51px;text-align:right;letter-spacing:0.35px">2e+96</div>
<div class="t" style="left:433px;top:547px;width:51px;text-align:right;letter-spacing:0.35px">4e+96</div>
<div class="t" style="left:433px;top:428px;width:51px;text-align:right;letter-spacing:0.35px">6e+96</div>
<div class="t" style="left:433px;top:309px;width:51px;text-align:right;letter-spacing:0.35px">8e+96</div>
<div class="t" style="left:433px;top:190px;width:51px;text-align:right;letter-spacing:0.35px">1e+97</div>
<div class="t" style="left:474.0px;top:810px;width:60px;text-align:center;letter-spacing:.1px">0</div>
<div class="t" style="left:681.2px;top:810px;width:60px;text-align:center;letter-spacing:.1px">200</div>
<div class="t" style="left:888.4px;top:810px;width:60px;text-align:center;letter-spacing:.1px">400</div>
<div class="t" style="left:1095.6px;top:810px;width:60px;text-align:center;letter-spacing:.1px">600</div>
<div class="t" style="left:1302.8px;top:810px;width:60px;text-align:center;letter-spacing:.1px">800</div>
<div class="t" style="left:1510.0px;top:810px;width:60px;text-align:center;letter-spacing:.1px">1,000</div>
<div class="a" style="left:1561px;top:103px;width:43px;height:25px;background:#fff;border-left:2px solid #6e6e6e;border-top:2px solid #6e6e6e;border-bottom:2px solid #f8f8f8;border-right:2px solid #f8f8f8"></div>
<div class="a" style="left:1567px;top:114.6px;width:20px;height:2px;background:#0072bd"></div>
<div class="t" style="left:1593px;top:108.5px">V</div>
<div class="a" style="left:23px;top:826px;width:1582px;height:1px;background:#a0a0a0"></div>
<div class="a" style="left:23px;top:827px;width:1582px;height:69px;background:#fff"></div>
<div class="a" style="left:23px;top:896px;width:1582px;height:1px;background:#a0a0a0"></div>
<div class="a" style="left:1589px;top:827px;width:16px;height:69px;background:#f0f0f0"></div>
<div class="a" style="left:1589px;top:844px;width:15px;height:33px;background:#cdcdcd"></div>
<svg class="a" style="left:1592px;top:832px" width="9" height="8" viewBox="0 0 9 8"><path d="M1 6.4 L4.5 2.6 L8 6.4" fill="none" stroke="#505050" stroke-width="2"/></svg>
<svg class="a" style="left:1592px;top:883px" width="9" height="8" viewBox="0 0 9 8"><path d="M1 1.8 L4.5 5.6 L8 1.8" fill="none" stroke="#505050" stroke-width="2"/></svg>
<div class="t b" style="left:27px;top:830px;letter-spacing:.05px">C:\Users\Alan\Desktop\OpenCOR\models\noble_model_1962.cellml</div>
<div class="t" style="left:39px;top:843px"><span class="b" style="letter-spacing:-.1px">Runtime:</span><span class="th" style="color:#2e8b2e;margin-left:3px">valid</span><span class="th" style="color:#00008b">.</span></div>
<div class="t" style="left:39px;top:856px"><span class="b" style="letter-spacing:-.1px">Model type:</span><span class="th" style="color:#00008b;margin-left:3px;letter-spacing:-.6px">ODE.</span></div>
<div class="t" style="left:39px;top:869px"><span class="b" style="letter-spacing:-.1px">Simulation time:</span><span class="th" style="color:#00008b;margin-left:3px;letter-spacing:-.1px">0ms using Euler (forward).</span></div>
</div></body></html>
